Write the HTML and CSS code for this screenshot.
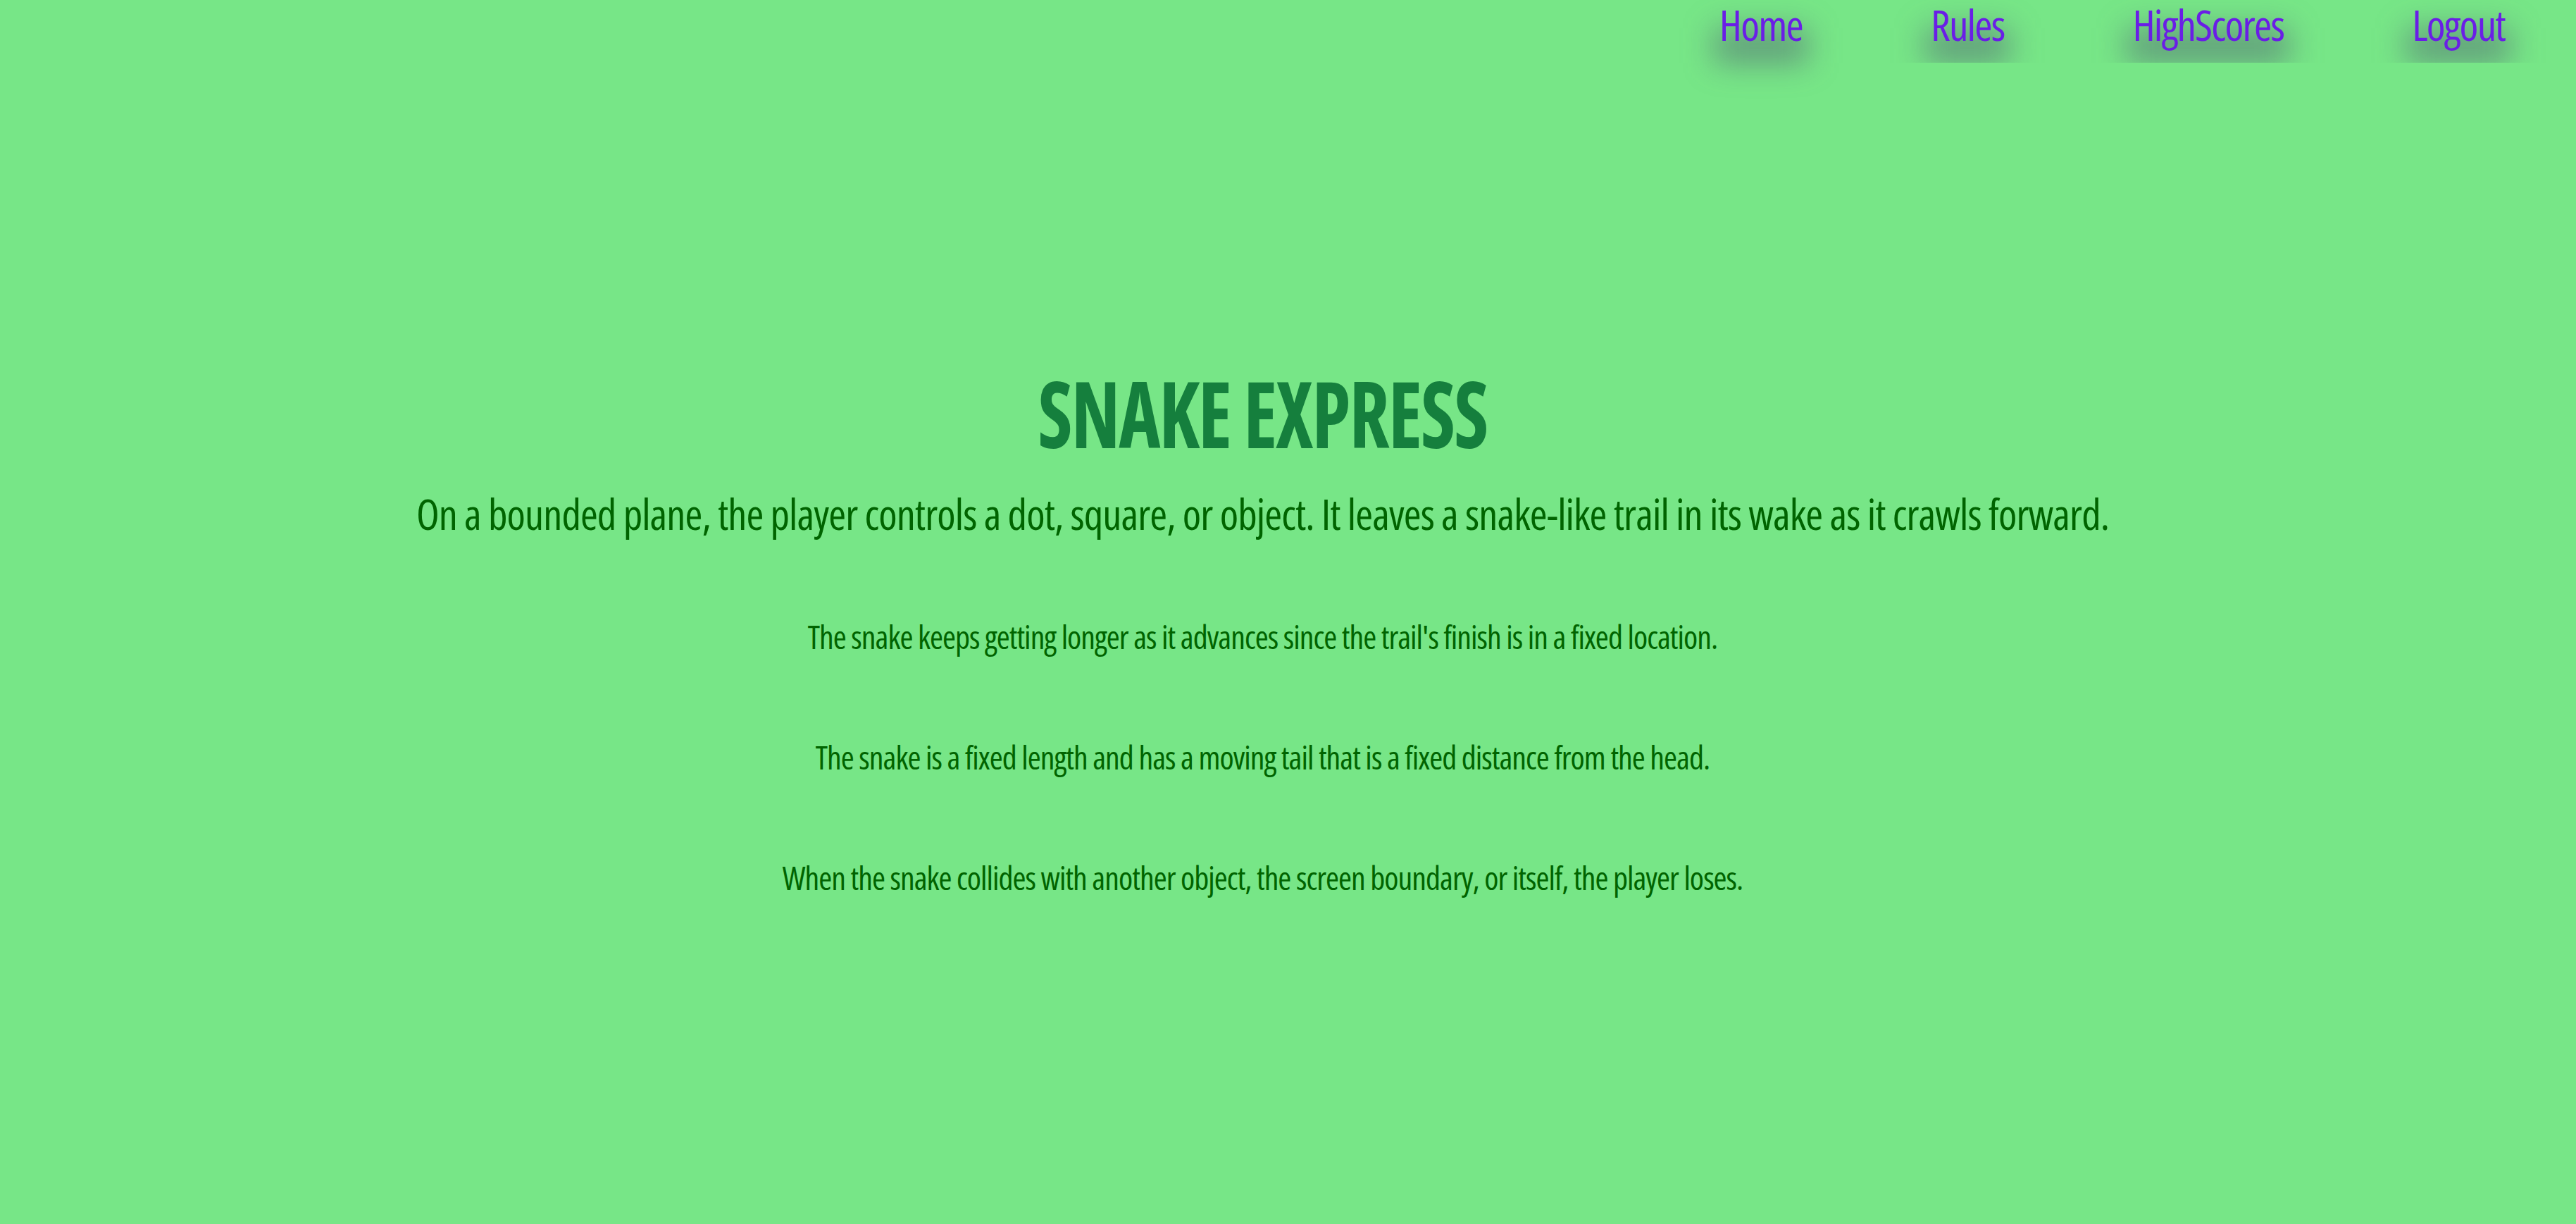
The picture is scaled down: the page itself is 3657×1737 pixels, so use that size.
FILE: index.html
```html
<!DOCTYPE html>
<html lang="en">
<head>
<meta charset="utf-8">
<title>Snake Express</title>
<link rel="stylesheet" href="styles.css">
</head>
<body>
<header class="topbar">
  <nav>
    <ul class="nav-list">
      <li class="nav-item"><a class="nav-link nav-link--active" href="#">Home</a></li>
      <li class="nav-item"><a class="nav-link" href="#">Rules</a></li>
      <li class="nav-item"><a class="nav-link" href="#">HighScores</a></li>
      <li class="nav-item"><a class="nav-link" href="#">Logout</a></li>
    </ul>
  </nav>
</header>
<main class="intro">
  <h1 class="title">SNAKE EXPRESS</h1>
  <p class="lead">On a bounded plane, the player controls a dot, square, or object. It leaves a snake-like trail in its wake as it crawls forward.</p>
  <p class="rule">The snake keeps getting longer as it advances since the trail's finish is in a fixed location.</p>
  <p class="rule">The snake is a fixed length and has a moving tail that is a fixed distance from the head.</p>
  <p class="rule">When the snake collides with another object, the screen boundary, or itself, the player loses.</p>
</main>
</body>
</html>
```
FILE: styles.css
```css
html, body {
  margin: 0;
  padding: 0;
}
body {
  background: #77e687;
  font-family: "Open Sans", "Roboto", sans-serif;
  font-stretch: 75%;
  min-height: 1737px;
}

.topbar {
  height: 89px;
}
.nav-list {
  list-style: none;
  margin: 0;
  padding: 0 10px 0 0;
  display: flex;
  justify-content: flex-end;
  height: 89px;
}
.nav-item {
  padding: 0 91px;
  height: 89px;
}
.nav-link {
  position: relative;
  z-index: 0;
  display: inline-block;
  font-size: 61px;
  line-height: 70px;
  font-weight: 400;
  letter-spacing: -1.8px;
  color: #6a1ee6;
  text-decoration: none;
}
/* soft drop shadow under each link, cut off at the bottom of the bar */
.nav-link::before {
  content: "";
  position: absolute;
  z-index: -1;
  left: -8px;
  right: -8px;
  top: 40px;
  height: 50px;
  background: rgba(75, 78, 110, 0.48);
  filter: blur(22px);
  clip-path: polygon(-150px -150px, calc(100% + 150px) -150px, calc(100% + 150px) 49px, -150px 49px);
}
.nav-link--active::before {
  clip-path: none;
}

.intro {
  padding: 432px 72px 0 0;
  text-align: center;
}
.title {
  margin: 0;
  font-size: 130px;
  line-height: 130px;
  font-weight: 700;
  color: #157f3d;
  letter-spacing: -2px;
  transform: scaleX(0.86);
}
.lead {
  margin: 48px 0 0;
  font-size: 60px;
  line-height: 60px;
  font-weight: 500;
  color: #006400;
  letter-spacing: -0.9px;
}
.rule {
  margin: 121px 0 0;
  font-size: 46px;
  line-height: 46px;
  font-weight: 500;
  color: #006400;
  letter-spacing: -1px;
}
.rule + .rule {
  margin-top: 125px;
}
```
